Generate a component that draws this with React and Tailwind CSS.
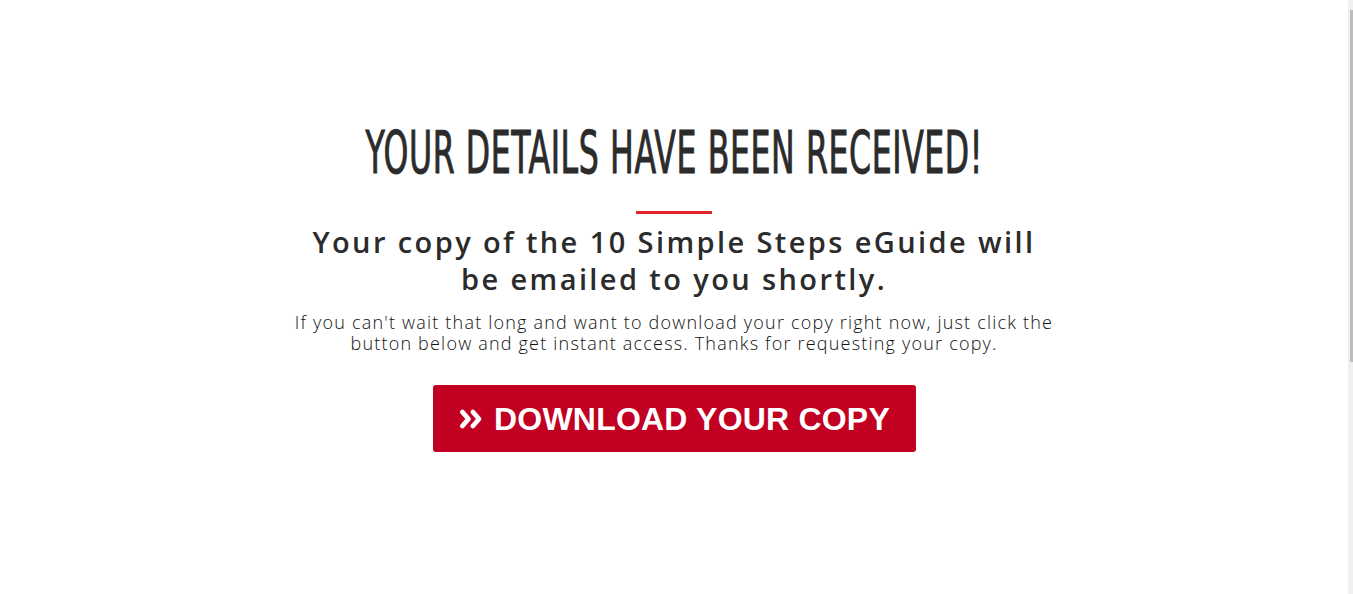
import React from 'react'

const DoubleChevron = () => (
    <svg viewBox="0 0 32 32" className="h-[28px] w-[28px]" fill="none" stroke="currentColor" strokeWidth="5.5" strokeLinecap="round" strokeLinejoin="round">
        <path d="M5 8 L12 16 L5 24" />
        <path d="M17 8 L24 16 L17 24" />
    </svg>
)

const App = () => {
    return (
        <div className="flex h-[594px] w-full bg-white overflow-hidden">
            <main className="flex-1 flex flex-col items-center pt-[122px]">
                <h1
                    className="text-[58px] leading-[62px] text-[#2b2b2b] font-normal scale-x-[0.605] tracking-[1px] whitespace-nowrap [-webkit-text-stroke:1px_#2b2b2b]"
                    style={{ fontFamily: '"DejaVu Sans Condensed", "Liberation Sans", sans-serif' }}
                >
                    YOUR DETAILS HAVE BEEN RECEIVED!
                </h1>

                <div className="mt-[27px] h-[3px] w-[76px] bg-[#e3242b]" />

                <h2
                    className="mt-[9px] w-[820px] text-center text-[29px] leading-[37px] font-semibold text-[#2b2b2b] tracking-[2.4px]"
                    style={{ fontFamily: '"Open Sans", "Lato", sans-serif' }}
                >
                    Your copy of the 10 Simple Steps eGuide will<br />
                    be emailed to you shortly.
                </h2>

                <p
                    className="mt-[15px] text-center text-[18px] leading-[21px] font-light text-[#111] tracking-[1.2px]"
                    style={{ fontFamily: '"Open Sans", "Lato", sans-serif' }}
                >
                    If you can't wait that long and want to download your copy right now, just click the<br />
                    button below and get instant access. Thanks for requesting your copy.
                </p>

                <a
                    href="#"
                    className="mt-[31px] flex h-[67px] w-[483px] items-center justify-center gap-[8px] rounded-[3px] bg-[#c20022] text-white"
                >
                    <DoubleChevron />
                    <span
                        className="text-[32px] font-bold tracking-[0.2px]"
                        style={{ fontFamily: '"Liberation Sans", Arial, sans-serif' }}
                    >
                        DOWNLOAD YOUR COPY
                    </span>
                </a>
            </main>

            <div className="w-[5px] bg-[#efefef] pt-[10px] flex justify-end">
                <div className="h-[352px] w-[3px] bg-[#bdbdbd]" />
            </div>
        </div>
    )
}

export default App
